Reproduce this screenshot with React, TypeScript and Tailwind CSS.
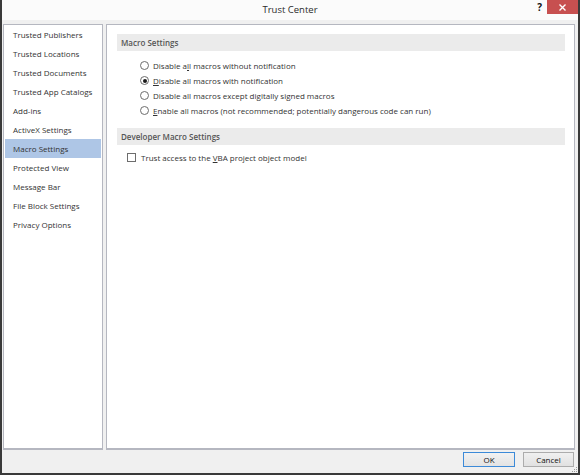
import type { ReactNode } from "react";

const navItems = [
  "Trusted Publishers",
  "Trusted Locations",
  "Trusted Documents",
  "Trusted App Catalogs",
  "Add-ins",
  "ActiveX Settings",
  "Macro Settings",
  "Protected View",
  "Message Bar",
  "File Block Settings",
  "Privacy Options",
];

function Radio({ checked, children }: { checked?: boolean; children: ReactNode }) {
  return (
    <div className="flex h-[15px] items-center">
      <span className="flex h-[9px] w-[9px] items-center justify-center rounded-full border border-[#6d6d6d] bg-white">
        {checked && <span className="h-[4px] w-[4px] rounded-full bg-[#1a1a1a]" />}
      </span>
      <span className="ml-[4px]">{children}</span>
    </div>
  );
}

function SectionHeader({ children }: { children: ReactNode }) {
  return (
    <div className="flex h-[17px] items-center bg-[#ebebeb] pl-[4px] font-semibold text-[#555]">
      {children}
    </div>
  );
}

export default function App() {
  return (
    <div className="relative flex h-[475px] w-[580px] flex-col border-x-2 border-b-2 border-[#3a3a3a] bg-[#f0f0f0] font-['Open_Sans',sans-serif] text-[8px] text-[#333]">
      {/* title bar */}
      <div className="flex h-[20px] shrink-0 items-center justify-center bg-[#fbfbfb] text-[9.5px] text-[#2b2b2b]">
        Trust Center
      </div>
      <span className="absolute right-[36px] top-[1px] text-[10px] font-bold leading-[12px] text-[#111]">?</span>
      <div className="absolute right-0 top-0 flex h-[14px] w-[31px] items-center justify-center bg-[#c75050]">
        <svg width="7" height="7" viewBox="0 0 7 7">
          <path d="M0.5 0.5 L6.5 6.5 M6.5 0.5 L0.5 6.5" stroke="white" strokeWidth="1.4" />
        </svg>
      </div>

      {/* body */}
      <div className="mt-[4px] flex h-[426px] shrink-0 gap-[3px] pl-[1px] pr-[3px]">
        <div className="w-[100px] border border-b-2 border-[#b5b7c0] bg-white">
          {navItems.map((item) => (
            <div
              key={item}
              className={`mx-[1px] flex h-[19px] items-center pl-[8px] ${
                item === "Macro Settings" ? "bg-[#aec6e6]" : ""
              }`}
            >
              {item}
            </div>
          ))}
        </div>
        <div className="flex-1 border border-b-2 border-[#b5b7c0] bg-white pl-[10px] pr-[9px] pt-[9px]">
          <SectionHeader>Macro Settings</SectionHeader>
          <div className="mt-[7px] pl-[23px]">
            <Radio>
              Disable a<u>l</u>l macros without notification
            </Radio>
            <Radio checked>
              <u>D</u>isable all macros with notification
            </Radio>
            <Radio>
              Disable all macros except di<u>g</u>itally signed macros
            </Radio>
            <Radio>
              <u>E</u>nable all macros (not recommended; potentially dangerous code can run)
            </Radio>
          </div>
          <div className="mt-[10px]">
            <SectionHeader>Developer Macro Settings</SectionHeader>
          </div>
          <div className="mt-[5px] flex h-[15px] items-center pl-[10px]">
            <span className="h-[9px] w-[9px] border border-[#6d6d6d] bg-white" />
            <span className="ml-[5px]">
              Trust access to the <u>V</u>BA project object model
            </span>
          </div>
        </div>
      </div>

      {/* footer */}
      <div className="relative flex flex-1 items-start justify-end gap-[8px] pr-[4px] pt-[2px] text-[#111]">
        <button className="flex h-[15px] w-[52px] items-center justify-center border border-[#3c8ad8] bg-gradient-to-b from-[#f2f2f2] to-[#e3e3e3]">
          OK
        </button>
        <button className="flex h-[15px] w-[51px] items-center justify-center border border-[#acacac] bg-gradient-to-b from-[#f0f0f0] to-[#e1e1e1]">
          Cancel
        </button>
        <svg className="absolute bottom-0 right-0" width="7" height="7" viewBox="0 0 7 7">
          <rect x="5" y="1" width="1" height="1" fill="#9a9a9a" />
          <rect x="3" y="3" width="1" height="1" fill="#9a9a9a" />
          <rect x="5" y="3" width="1" height="1" fill="#9a9a9a" />
          <rect x="1" y="5" width="1" height="1" fill="#9a9a9a" />
          <rect x="3" y="5" width="1" height="1" fill="#9a9a9a" />
          <rect x="5" y="5" width="1" height="1" fill="#9a9a9a" />
        </svg>
      </div>
    </div>
  );
}
